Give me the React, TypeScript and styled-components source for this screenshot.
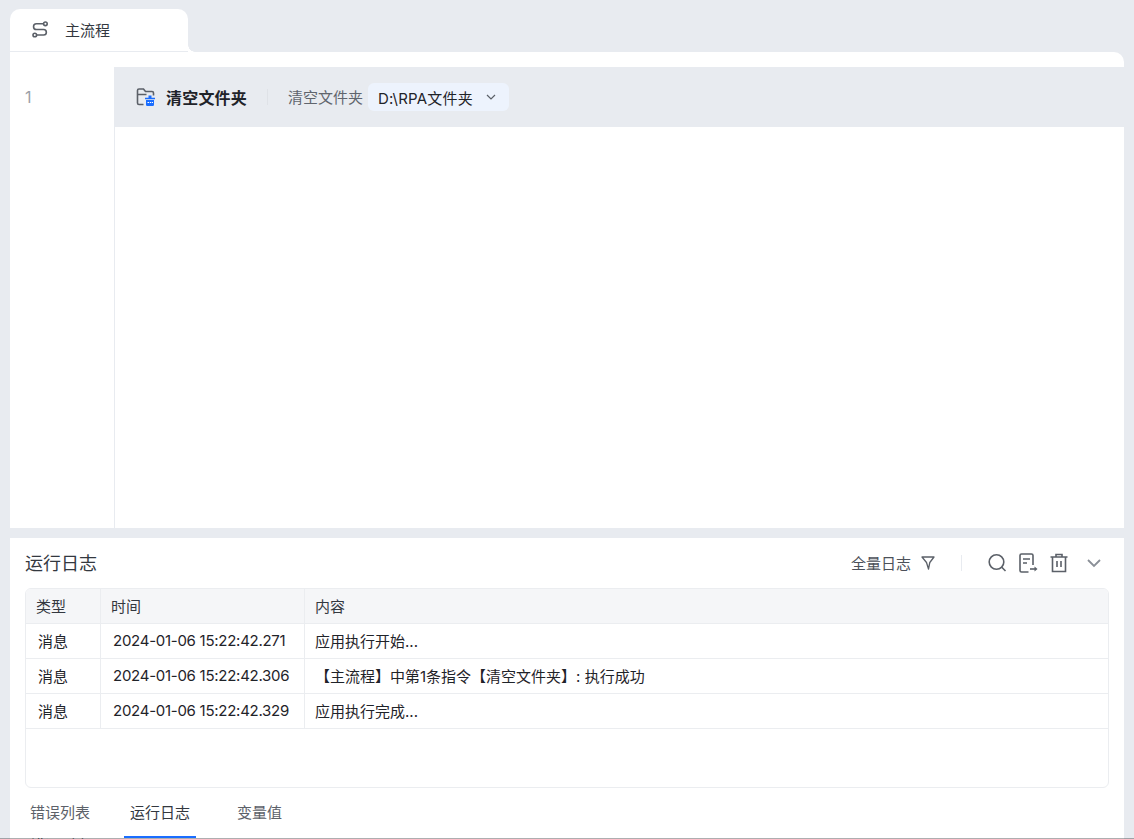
import React from "react";
import styled, { createGlobalStyle } from "styled-components";

const Global = createGlobalStyle`
  html, body { margin: 0; padding: 0; height: 839px; overflow: hidden; background: #e8ebf0; }
  body { font-family: Inter, "Noto Sans CJK SC", sans-serif; color: #1f2329; }
`;
const Page = styled.div`
  position: relative; height: 839px; box-sizing: border-box; padding: 9px 10px 0; display: flex; flex-direction: column; overflow: hidden;
  &::after { content: ""; position: absolute; left: 0; right: 0; bottom: 0; height: 1px; background: rgba(60, 62, 66, 0.42); }
`;
const TabStrip = styled.div`display: flex; height: 43px; flex: none;`;
const FlowTab = styled.div`
  position: relative; width: 178px; height: 43px; box-sizing: border-box; background: #fff; border-radius: 10px 10px 0 0;
  border-bottom: 1px solid #e8ebf0; display: flex; align-items: center; gap: 17px; padding: 0 0 1px 22px; font-size: 15px; color: #33383f;
  &::after {
    content: ""; position: absolute; left: 100%; bottom: -1px; width: 7px; height: 7px;
    background: radial-gradient(circle at 100% 0, #e8ebf0 6.5px, #fff 7px);
  }
`;
const Editor = styled.div`
  height: 476px; flex: none; background: #fff; border-radius: 0 10px 0 0; display: flex; padding-top: 15px; box-sizing: border-box;
`;
const Gutter = styled.div`
  width: 105px; flex: none; box-sizing: border-box; border-right: 1px solid #e8ebf0; padding: 20px 0 0 15px; font-size: 16px; line-height: 20px; color: #9ba0a8;
`;
const Canvas = styled.div`flex: 1; min-width: 0;`;
const CommandRow = styled.div`
  height: 60px; background: #e8ebf0; display: flex; align-items: center; padding-left: 21px;
`;
const CommandName = styled.div`
  margin-left: 10px; font-size: 16px; font-weight: 700; color: #1f2329; width: 81px; white-space: nowrap; letter-spacing: 0.2px;
`;
const VDivider = styled.div`width: 1px; height: 16px; background: #dfe2e7; margin-left: 20px;`;
const CommandLabel = styled.div`margin-left: 20px; padding-bottom: 2px; font-size: 15px; color: #60656d; white-space: nowrap;`;
const PathSelect = styled.div`
  margin-left: 5px; width: 141px; height: 28px; box-sizing: border-box; border-radius: 6px; background: #edf3fd; display: flex; align-items: center;
  padding-left: 10px; gap: 12px; font-size: 15px; color: #1f2329; white-space: nowrap;
`;
const PathText = styled.span`letter-spacing: 0.2px;`;
const LogPanel = styled.div`
  margin-top: 10px; flex: 1; min-height: 0; background: #fff; display: flex; flex-direction: column; padding: 0 15px;
`;
const LogHead = styled.div`height: 50px; flex: none; display: flex; align-items: center;`;
const LogTitle = styled.div`font-size: 18px; color: #33383f; flex: 1; padding-bottom: 2px;`;
const FilterLabel = styled.div`font-size: 15px; color: #4c5159; margin-right: 10px; padding-bottom: 2px;`;
const ToolDivider = styled.div`width: 1px; height: 16px; background: #e8ebf0; margin: 0 25px 0 26px;`;
const ToolIcons = styled.div`display: flex; align-items: center; gap: 11px; margin-right: 16px;`;
const ChevronSlot = styled.div`display: flex; margin-right: 6px;`;
const Table = styled.div`
  height: 200px; flex: none; box-sizing: border-box; border: 1px solid #ebedf0; border-radius: 6px; overflow: hidden;
`;
const Row = styled.div<{ $head?: boolean }>`
  display: grid; grid-template-columns: 74px 204px 1fr; height: 35px; border-bottom: 1px solid #ebedf0; box-sizing: border-box;
  background: ${p => (p.$head ? "#f5f6f8" : "#fff")}; color: ${p => (p.$head ? "#33383f" : "#1f2329")};
`;
const Cell = styled.div<{ $pad: number }>`
  display: flex; align-items: center; font-size: 15px; padding: 0 0 2px ${p => p.$pad}px; white-space: nowrap;
  & + & { border-left: 1px solid #ebedf0; }
`;
const TimeCell = styled(Cell)`letter-spacing: -0.27px;`;
const BottomTabs = styled.div`display: flex; height: 50px; flex: none; align-items: stretch; margin-left: -1px;`;
const BottomTab = styled.div<{ $active?: boolean; $after: number }>`
  box-sizing: border-box; display: flex; align-items: center; padding: 0 6px 2px; font-size: 15px; margin-right: ${p => p.$after}px;
  color: ${p => (p.$active ? "#33383f" : "#5c6169")};
  border-bottom: 2px solid ${p => (p.$active ? "#1a6dff" : "transparent")};
`;
const ClippedText = styled.div`font-size: 15px; line-height: 20px; color: #33383f; padding-left: 5px; margin-top: -2px;`;

const FlowIcon = () => (
  <svg width="16" height="17" viewBox="0 0 16 17" fill="none" stroke="#5b6068" strokeWidth="1.6">
    <circle cx="13.400" cy="2.800" r="1.800" />
    <circle cx="2.800" cy="14" r="1.800" />
    <path d="M11.500 2.800H4.400a2.850 2.850 0 0 0 0 5.700h7.200a2.750 2.750 0 0 1 0 5.500H4.700" />
  </svg>
);
const FolderIcon = () => (
  <svg width="20" height="20" viewBox="0 0 20 20" fill="none">
    <path d="M7.500 17.500H3a1.500 1.500 0 0 1-1.500-1.500V3.500A1.500 1.500 0 0 1 3 2h4.500l2 2.500H16A1.500 1.500 0 0 1 17.500 6v2.500M1.500 7.500h9" stroke="#5b6068" strokeWidth="1.600" />
    <path d="M12.500 8.500h3v2.200h3.500v1.600h-10v-1.600h3.500z" fill="#1a6dff" />
    <path d="M10 13h8v4.800a1.200 1.200 0 0 1-1.200 1.200h-5.600a1.200 1.200 0 0 1-1.200-1.200z" fill="#1a6dff" />
    <path d="M11.500 15.500h1.500M13.800 15.500h1.500M16 15.500h1" stroke="#fff" strokeWidth="1" />
  </svg>
);
const Chevron = ({ color, size }: { color: string; size: number }) => (
  <svg width={size} height={size} viewBox="0 0 12 12" fill="none" stroke={color} strokeWidth="1.200">
    <path d="M2 4l4 4 4-4" />
  </svg>
);
const FilterIcon = () => (
  <svg width="14" height="14" viewBox="0 0 14 14" fill="none" stroke="#5b6068" strokeWidth="1.300" strokeLinejoin="round">
    <path d="M1 1h12L8.800 6.500 7.500 13 5.500 6.500z" />
  </svg>
);
const SearchIcon = () => (
  <svg width="20" height="20" viewBox="0 0 20 20" fill="none" stroke="#5b6068" strokeWidth="1.600">
    <circle cx="9.500" cy="9" r="7.300" />
    <path d="M14.800 14.300l3.700 3.700" />
  </svg>
);
const ExportIcon = () => (
  <svg width="20" height="20" viewBox="0 0 20 20" fill="none" stroke="#5b6068" strokeWidth="1.600">
    <path d="M10.500 19H3.500A1.500 1.500 0 0 1 2 17.500v-15A1.500 1.500 0 0 1 3.500 1h10A1.500 1.500 0 0 1 15 2.500V12" />
    <path d="M5 6h7M5 10h4" />
    <path d="M12 16h5" />
    <path d="M16.500 13.500l3 2.500-3 2.500z" fill="#5b6068" stroke="none" />
  </svg>
);
const TrashIcon = () => (
  <svg width="20" height="20" viewBox="0 0 20 20" fill="none" stroke="#5b6068" strokeWidth="1.600">
    <path d="M1.500 4h17M7 4V1.500h6V4" />
    <path d="M3.500 4v14.500h13V4" />
    <path d="M8 8v6M12 8v6" />
  </svg>
);

const logs = [
  ["消息", "2024-01-06 15:22:42.271", "应用执行开始..."],
  ["消息", "2024-01-06 15:22:42.306", "【主流程】中第1条指令【清空文件夹】: 执行成功"],
  ["消息", "2024-01-06 15:22:42.329", "应用执行完成..."],
];

export default function App() {
  return (
    <Page>
      <Global />
      <TabStrip>
        <FlowTab><FlowIcon />主流程</FlowTab>
      </TabStrip>
      <Editor>
        <Gutter>1</Gutter>
        <Canvas>
          <CommandRow>
            <FolderIcon />
            <CommandName>清空文件夹</CommandName>
            <VDivider />
            <CommandLabel>清空文件夹</CommandLabel>
            <PathSelect><PathText>D:\RPA文件夹</PathText><Chevron color="#5b6068" size={12} /></PathSelect>
          </CommandRow>
        </Canvas>
      </Editor>
      <LogPanel>
        <LogHead>
          <LogTitle>运行日志</LogTitle>
          <FilterLabel>全量日志</FilterLabel>
          <FilterIcon />
          <ToolDivider />
          <ToolIcons>
            <SearchIcon /><ExportIcon /><TrashIcon />
          </ToolIcons>
          <ChevronSlot><Chevron color="#8a8f97" size={18} /></ChevronSlot>
        </LogHead>
        <Table>
          <Row $head>
            <Cell $pad={10}>类型</Cell><Cell $pad={10}>时间</Cell><Cell $pad={10}>内容</Cell>
          </Row>
          {logs.map(l => (
            <Row key={l[1]}>
              <Cell $pad={12}>{l[0]}</Cell><TimeCell $pad={12}>{l[1]}</TimeCell><Cell $pad={10}>{l[2]}</Cell>
            </Row>
          ))}
        </Table>
        <BottomTabs>
          <BottomTab $after={28}>错误列表</BottomTab>
          <BottomTab $after={35} $active>运行日志</BottomTab>
          <BottomTab $after={0}>变量值</BottomTab>
        </BottomTabs>
        <ClippedText>错误列表</ClippedText>
      </LogPanel>
    </Page>
  );
}
